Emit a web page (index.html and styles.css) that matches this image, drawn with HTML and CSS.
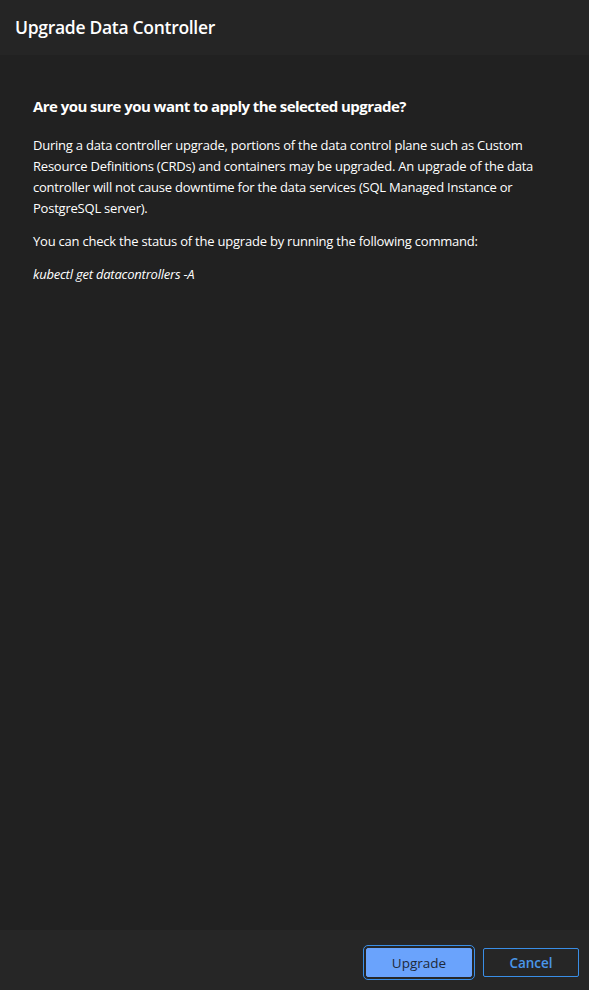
FILE: index.html
```html
<!DOCTYPE html>
<html>
<head>
<meta charset="utf-8">
<link rel="stylesheet" href="styles.css">
</head>
<body>
<div class="dialog">
  <header class="header"><h1 class="title">Upgrade Data Controller</h1></header>
  <main class="content">
    <h2 class="question">Are you sure you want to apply the selected upgrade?</h2>
    <p class="para">During a data controller upgrade, portions of the data control plane such as Custom Resource Definitions (CRDs) and containers may be upgraded. An upgrade of the data controller will not cause downtime for the data services (SQL Managed Instance or PostgreSQL server).</p>
    <p class="para">You can check the status of the upgrade by running the following command:</p>
    <p class="para cmd">kubectl get datacontrollers -A</p>
  </main>
  <footer class="footer">
    <button class="btn primary">Upgrade</button>
    <button class="btn secondary">Cancel</button>
  </footer>
</div>
</body>
</html>
```
FILE: styles.css
```css
html, body { margin: 0; padding: 0; height: 100%; }
body { background: #212121; font-family: "Open Sans", "Noto Sans", sans-serif; color: #fff; }
.dialog { display: flex; flex-direction: column; height: 990px; }
.header { background: #252525; height: 55px; padding: 0 15px; box-sizing: border-box; }
.title { margin: 0; padding-top: 15px; font-size: 17.5px; font-weight: 600; line-height: 24px; letter-spacing: -0.3px; }
.content { flex: 1; padding: 40px 33px 0; }
.question { margin: 0 0 18px; font-size: 15px; font-weight: 700; line-height: 22px; letter-spacing: -0.55px; }
.para { margin: 0 0 12px; font-size: 13px; line-height: 21px; letter-spacing: -0.22px; }
.cmd { font-style: italic; }
.footer { background: #262626; height: 60px; display: flex; justify-content: flex-end; align-items: center; gap: 11px; padding: 5px 10px 0 0; box-sizing: border-box; }
.btn { font-family: inherit; font-size: 13.5px; height: 29px; border-radius: 2px; box-sizing: border-box; }
.primary { width: 106px; background: #6aa3fc; color: #1e2a3a; border: 1px solid #6aa3fc; outline: 1px solid #3a8ee6; outline-offset: 2px; }
.secondary { width: 96px; background: transparent; color: #4a97ea; border: 1px solid #3a8ee6; font-weight: 600; }
```
